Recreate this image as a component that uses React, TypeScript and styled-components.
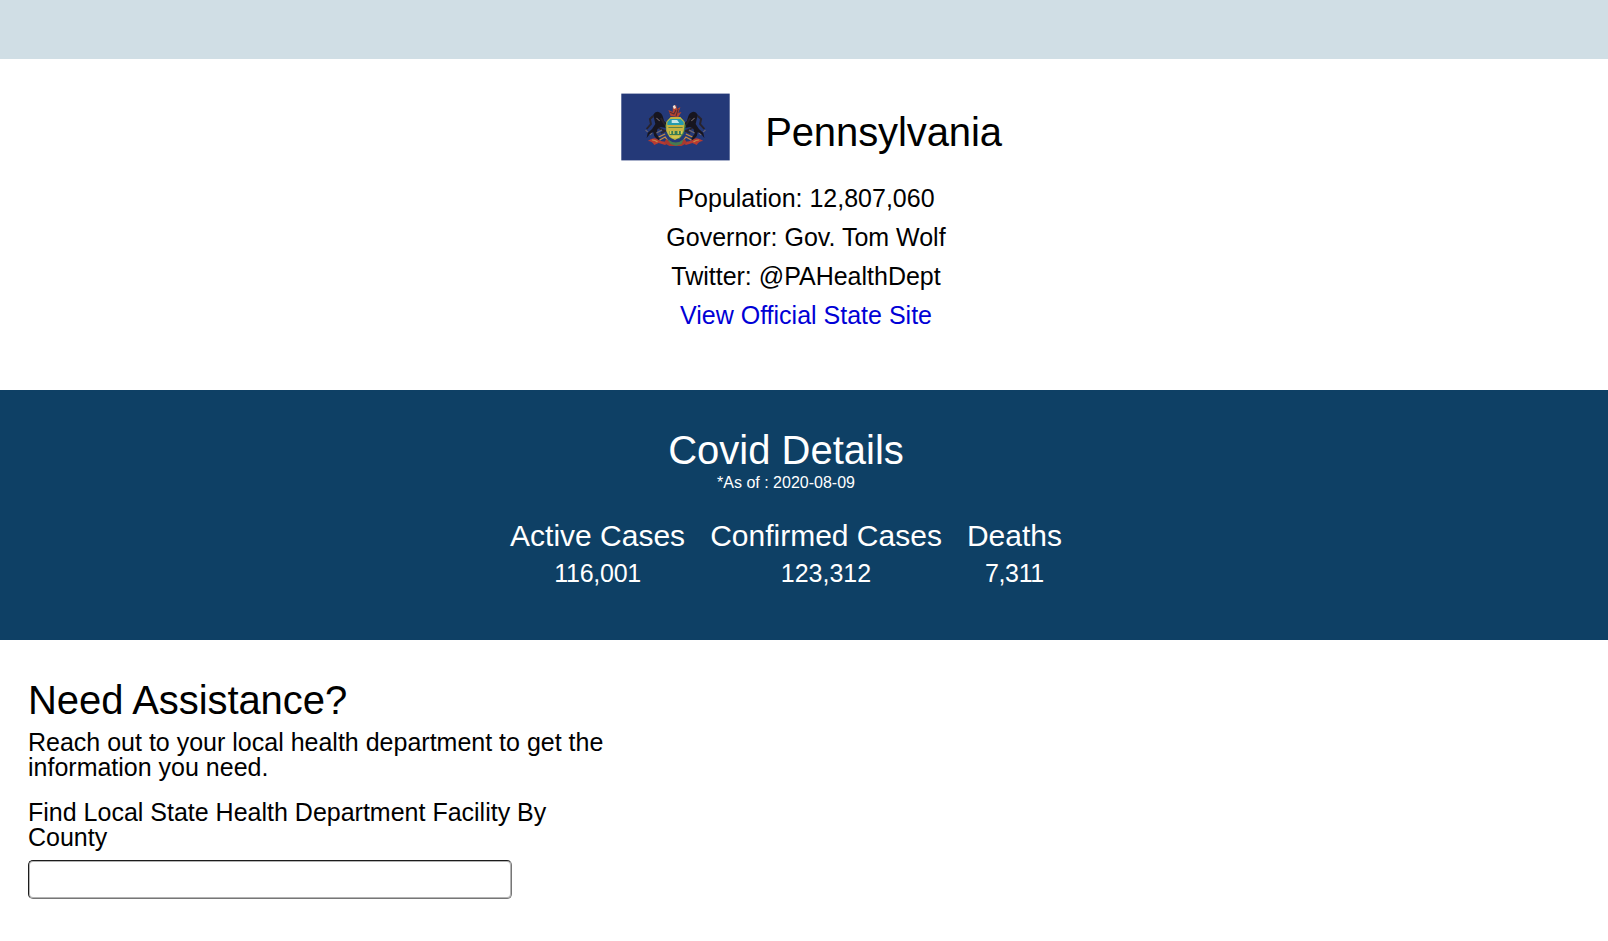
import React from "react";
import styled, { createGlobalStyle } from "styled-components";

const GlobalStyle = createGlobalStyle`
  *, *::before, *::after { box-sizing: border-box; }
  html, body { margin: 0; padding: 0; background: #fff; }
  body {
    font-family: "Liberation Sans", Arial, Helvetica, sans-serif;
    font-size: 25px;
    line-height: 1;
    color: #000;
    overflow: hidden;
  }
  h1, h2, p, dl, dt, dd { margin: 0; font-weight: 400; }
`;

const Page = styled.main`
  display: flex;
  flex-direction: column;
  min-height: 941px;
`;

const TopBar = styled.header`
  height: 59px;
  background: #d0dee5;
`;

const StateSection = styled.section`
  height: 331px;
  padding: 34px 0 0 4px;
  display: flex;
  flex-direction: column;
  align-items: center;
`;

const StateHeading = styled.div`
  display: flex;
  align-items: flex-start;
  gap: 35px;
  height: 93px;
  padding-left: 11px;
`;

const Flag = styled.svg`
  display: block;
  width: 109px;
  height: 68px;
`;

const Title = styled.h1<{ $tracking?: number }>`
  font-size: 40px;
  line-height: 40px;
  letter-spacing: ${(p) => p.$tracking ?? 0}px;
`;

const StateTitle = styled(Title)`
  padding-top: 19px;
`;

const Facts = styled.div`
  display: flex;
  flex-direction: column;
  align-items: center;
  gap: 14px;
`;

const SiteLink = styled.a`
  color: #0000d6;
  text-decoration: none;
`;

const CovidSection = styled.section`
  height: 250px;
  padding: 40px 36px 0 0;
  display: flex;
  flex-direction: column;
  align-items: center;
  background: #0e4065;
  color: #fff;
`;

const AsOf = styled.p`
  padding-top: 5px;
  font-size: 16px;
  line-height: 16px;
`;

const Stats = styled.dl`
  display: flex;
  gap: 25px;
  padding-top: 30px;
`;

const Stat = styled.div`
  display: flex;
  flex-direction: column;
  align-items: center;
  gap: 10px;
`;

const StatLabel = styled.dt`
  font-size: 30px;
  line-height: 30px;
`;

const StatValue = styled.dd<{ $tracking: number }>`
  line-height: 25px;
  letter-spacing: ${(p) => p.$tracking}px;
`;

const AssistSection = styled.section`
  width: 610px;
  padding: 40px 0 0 28px;
  display: flex;
  flex-direction: column;
`;

const AssistText = styled.p`
  padding: 10px 0 20px;
`;

const CountyLabel = styled.label`
  width: 560px;
  padding-bottom: 10px;
`;

const CountyInput = styled.input`
  width: 484px;
  height: 39px;
  padding: 4px 8px;
  font: inherit;
  background: #fff;
  border: 1px solid;
  border-color: #1c1c1c #767676 #767676 #1c1c1c;
  border-radius: 5px;
  box-shadow: inset 0 0 0 1px #b4b4b4;
  outline: none;
`;

const stats = [
  { label: "Active Cases", value: "116,001", tracking: -0.25 },
  { label: "Confirmed Cases", value: "123,312", tracking: 0 },
  { label: "Deaths", value: "7,311", tracking: -0.35 },
];

const Horse = () => (
  <g>
    <path
      d="M34 22q2-4 5-3 3 1 4 5l1 4 3 3-1 4-5-1-3 2-1 5 3 4-1 3-4-5-1-4-3 2-3 4 1-5 4-4 3-5-1-5z"
      fill="#17151f"
    />
    <path d="M34 23l-3 3 1 5-4 5M39 35l6 3-4 2M41 25l4 7" stroke="#29232b" strokeWidth="1.8" fill="none" />
    <path d="M27 37l2 2M37 40l5-3M37 25l3 3M31 42l2-2" stroke="#756a70" strokeWidth="1" fill="none" />
    <path d="M29 48q6-5 10-1 5 3 10 1l-4 4-6-2-4 2q-2-4-6-4z" fill="#b93a31" />
    <path d="M33 47q3 0 5 2M40 47l5-3 2 3M39 44l6-3" stroke="#c58b46" strokeWidth="1.2" fill="none" />
  </g>
);

const PennsylvaniaFlag = () => (
  <Flag viewBox="0 0 109 68" role="img" aria-label="Flag of Pennsylvania">
    <rect x=".3" y=".6" width="108.4" height="66.8" fill="#243978" />
    <g transform="translate(-4.9 0) scale(1.09 1)">
      <Horse />
      <g transform="translate(109 0) scale(-1 1)">
        <Horse />
      </g>
      <path d="M46 46q8 8 17 0l2 4-5 3H49l-5-3z" fill="#a8392f" />
      <path d="M47 46q8 7 15 0l-2 5-5 2-5-2z" fill="#477b50" />
      <path d="M45 33l2-6 4-3h7l4 3 2 6-2 8-4 5h-7l-4-5z" fill="#397a52" />
      <path d="M46 29l4-5h9l4 5-1 9-3 6-5 3-5-3-3-6z" fill="#c5b343" />
      <path d="M47 29l3-3h9l3 3v3H47z" fill="#249aad" />
      <path d="M51 30v-3h5l2 3z" fill="#c4e5e8" />
      <path d="M48 34h13v1H48z" fill="#5d8144" />
      <path d="M49 38h11v4H49z" fill="#397a52" />
      <path d="M50 38v3m3-3v3m4-3v3m3-3v3M51 44h7" stroke="#d8cb51" strokeWidth="1.3" />
      <path d="M50 23l-2-6 4 2v-5l3-2 1 4 3-2-2 6 3-1-3 5z" fill="#b54430" />
      <path d="M52 13l2-1 1 3-2 1z" fill="#eee5dc" />
      <path d="M49 19l4 2 2-4M57 16l-2 7" stroke="#542d35" strokeWidth="1" fill="none" />
    </g>
  </Flag>
);

export default function App() {
  return (
    <>
      <GlobalStyle />
      <Page>
        <TopBar />
        <StateSection>
          <StateHeading>
            <PennsylvaniaFlag />
            <StateTitle $tracking={-0.1}>Pennsylvania</StateTitle>
          </StateHeading>
          <Facts>
            <p>Population: 12,807,060</p>
            <p>Governor: Gov. Tom Wolf</p>
            <p>Twitter: @PAHealthDept</p>
            <SiteLink href="#">View Official State Site</SiteLink>
          </Facts>
        </StateSection>
        <CovidSection>
          <Title as="h2">Covid Details</Title>
          <AsOf>*As of : 2020-08-09</AsOf>
          <Stats>
            {stats.map((s) => (
              <Stat key={s.label}>
                <StatLabel>{s.label}</StatLabel>
                <StatValue $tracking={s.tracking}>{s.value}</StatValue>
              </Stat>
            ))}
          </Stats>
        </CovidSection>
        <AssistSection>
          <Title as="h2" $tracking={-0.07}>Need Assistance?</Title>
          <AssistText>Reach out to your local health department to get the information you need.</AssistText>
          <CountyLabel htmlFor="county">Find Local State Health Department Facility By County</CountyLabel>
          <CountyInput id="county" type="text" />
        </AssistSection>
      </Page>
    </>
  );
}
